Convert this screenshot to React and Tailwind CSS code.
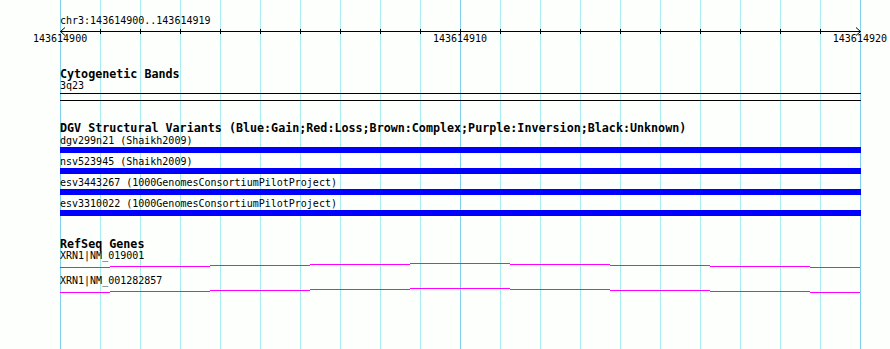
const gridXs = Array.from({ length: 21 }, (_, i) => 60 + i * 40)
const tickXs = gridXs.slice(1, -1)

// stepped y offsets for the transcript line, per x segment
const geneSteps = [
  [60, 110, 6],
  [110, 210, 5],
  [210, 310, 4],
  [310, 410, 3],
  [410, 510, 2],
  [510, 610, 3],
  [610, 710, 4],
  [710, 810, 5],
  [810, 860, 6],
]

const variants = [
  "dgv299n21 (Shaikh2009)",
  "nsv523945 (Shaikh2009)",
  "esv3443267 (1000GenomesConsortiumPilotProject)",
  "esv3310022 (1000GenomesConsortiumPilotProject)",
]

const transcripts = ["XRN1|NM_019001", "XRN1|NM_001282857"]

const Grid = () => (
  <svg className="absolute inset-0" width="890" height="349" shapeRendering="crispEdges">
    {gridXs.map((x, i) => (
      <line
        key={x}
        x1={x + 0.5}
        x2={x + 0.5}
        y1="0"
        y2="349"
        stroke={i % 10 === 0 ? "#80d2ee" : "#a8ecf0"}
        strokeWidth="1"
      />
    ))}
  </svg>
)

const Ruler = () => (
  <svg width="890" height="8" className="block overflow-visible">
    <line x1="60" x2="861" y1="5.5" y2="5.5" stroke="#000" shapeRendering="crispEdges" />
    {tickXs.map((x) => (
      <line key={x} x1={x + 0.5} x2={x + 0.5} y1="3" y2="8" stroke="#000" shapeRendering="crispEdges" />
    ))}
    <polyline points="65,1.5 60.5,5.5 65,9.5" fill="none" stroke="#000" strokeWidth="1" />
    <polyline points="856,1.5 860.5,5.5 856,9.5" fill="none" stroke="#000" strokeWidth="1" />
  </svg>
)

const GeneLine = () => (
  <svg width="800" height="15" viewBox="60 0 800 15" className="block" shapeRendering="crispEdges">
    {geneSteps.map(([a, b, y]) => (
      <line key={a} x1={a} x2={b} y1={y + 0.5} y2={y + 0.5} stroke="#ff00ff" strokeWidth="1" />
    ))}
  </svg>
)

const Title = ({ children, className = "" }) => (
  <div className={`ml-[60px] h-[12px] text-[11.7px] leading-[11px] font-bold whitespace-nowrap ${className}`}>
    {children}
  </div>
)

export default function App() {
  return (
    <div className="relative w-[890px] h-[349px] overflow-hidden bg-[#fcfffc] text-black font-['DejaVu_Sans_Mono','Liberation_Mono',monospace]">
      <Grid />

      <div className="relative flex flex-col">
        {/* position header */}
        <div className="ml-[60px] mt-[16px] text-[10px] leading-[10px]">chr3:143614900..143614919</div>
        <Ruler />
        <div className="ml-[33px] w-[854px] flex justify-between text-[10px] leading-[10px]">
          <span>143614900</span>
          <span>143614910</span>
          <span>143614920</span>
        </div>

        {/* Cytogenetic Bands */}
        <Title className="mt-[25px]">Cytogenetic Bands</Title>
        <div className="ml-[60px] h-[10px] text-[10px] leading-[10px]">3q23</div>
        <div className="ml-[60px] mt-[2px] w-[801px] h-[8px] border-y border-black" />

        {/* DGV */}
        <Title className="mt-[22px]">
          DGV Structural Variants (Blue:Gain;Red:Loss;Brown:Complex;Purple:Inversion;Black:Unknown)
        </Title>
        <div className="mt-[1px] flex flex-col">
          {variants.map((v) => (
            <div key={v} className="ml-[60px] mb-[4px]">
              <div className="h-[11px] text-[10px] leading-[10px] whitespace-nowrap">{v}</div>
              <div className="w-[801px] h-[6px] bg-[#0000ff]" />
            </div>
          ))}
        </div>

        {/* RefSeq */}
        <Title className="mt-[19px]">RefSeq Genes</Title>
        {transcripts.map((t) => (
          <div key={t} className="ml-[60px]">
            <div className="h-[10px] text-[10px] leading-[10px] whitespace-nowrap">{t}</div>
            <GeneLine />
          </div>
        ))}
      </div>
    </div>
  )
}
